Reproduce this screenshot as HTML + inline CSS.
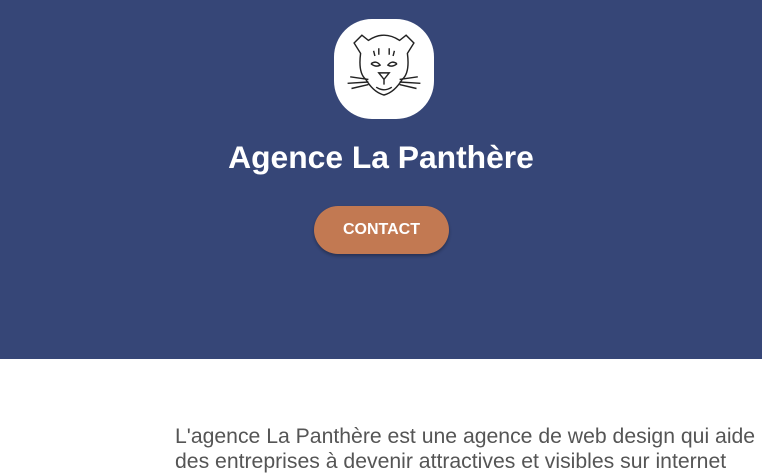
<!DOCTYPE html>
<html><head><meta charset="utf-8"><style>
body{margin:0;width:762px;height:453px;overflow:hidden;font-family:"Liberation Sans",sans-serif;background:#fff}
.hdr{position:absolute;left:0;top:0;width:762px;height:359px;background:#364677}
.logo{position:absolute;left:334px;top:19px;width:100px;height:100px;background:#fff;border-radius:38px}
h1{position:absolute;left:0;width:762px;top:139px;margin:0;text-align:center;color:#fff;font-size:31.8px;font-weight:bold}
.btn{position:absolute;left:314px;top:206px;width:135px;height:48px;border-radius:24px;background:#c27952;color:#fff;font-weight:bold;font-size:16px;line-height:48px;text-align:center;box-shadow:0 2px 3px rgba(0,0,0,.3)}
p{position:absolute;left:175px;top:424px;margin:0;width:600px;font-size:21.2px;line-height:25px;color:#555;white-space:nowrap}
</style></head><body>
<div class="hdr">
<div class="logo"><svg width="100" height="100" viewBox="0 0 100 100" fill="none" stroke="#222" stroke-width="1.1">
<g transform="translate(50 50) scale(1.3) translate(-50 -52)">
<path d="M27 32 L33 26 L38 30 Q50 22 62 30 L67 26 L73 32 L68 40 Q70 55 64 60 Q58 70 50 72 Q42 70 36 60 Q30 55 32 40 Z"/>
<path d="M40 48 Q44 45 47 49 Q44 51 40 48 M60 48 Q56 45 53 49 Q56 51 60 48"/>
<path d="M46 55 L50 60 L54 55 Z M50 60 V64 M44 66 Q50 70 56 66"/>
<path d="M24 58 L38 60 M22 63 L38 62 M25 67 L38 64 M76 58 L62 60 M78 63 L62 62 M75 67 L62 64"/>
<path d="M42 38 L43 42 M46 36 L46 41 M54 36 L54 41 M58 38 L57 42"/>
</g>
</svg></div>
<h1>Agence La Panthère</h1>
<div class="btn">CONTACT</div>
</div>
<p>L'agence La Panthère est une agence de web design qui aide<br>des entreprises à devenir attractives et visibles sur internet</p>
</body></html>
